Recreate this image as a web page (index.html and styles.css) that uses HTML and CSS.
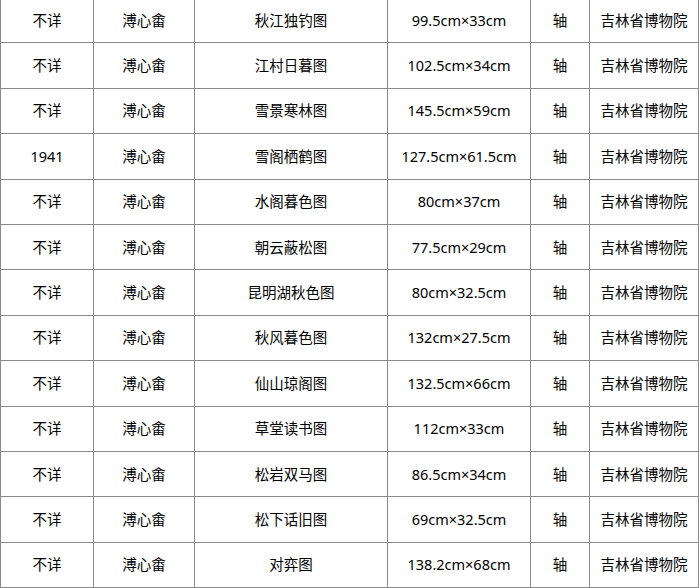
FILE: index.html
```html
<!DOCTYPE html>
<html lang="zh">
<head>
<meta charset="utf-8">
<link rel="stylesheet" href="styles.css">
</head>
<body>
<table class="works">
<colgroup>
<col class="c1"><col class="c2"><col class="c3"><col class="c4"><col class="c5"><col class="c6">
</colgroup>
<tbody>
<tr><td>不详</td><td>溥心畬</td><td>秋江独钓图</td><td>99.5cm×33cm</td><td>轴</td><td>吉林省博物院</td></tr>
<tr><td>不详</td><td>溥心畬</td><td>江村日暮图</td><td>102.5cm×34cm</td><td>轴</td><td>吉林省博物院</td></tr>
<tr><td>不详</td><td>溥心畬</td><td>雪景寒林图</td><td>145.5cm×59cm</td><td>轴</td><td>吉林省博物院</td></tr>
<tr><td>1941</td><td>溥心畬</td><td>雪阁栖鹤图</td><td>127.5cm×61.5cm</td><td>轴</td><td>吉林省博物院</td></tr>
<tr><td>不详</td><td>溥心畬</td><td>水阁暮色图</td><td>80cm×37cm</td><td>轴</td><td>吉林省博物院</td></tr>
<tr><td>不详</td><td>溥心畬</td><td>朝云蔽松图</td><td>77.5cm×29cm</td><td>轴</td><td>吉林省博物院</td></tr>
<tr><td>不详</td><td>溥心畬</td><td>昆明湖秋色图</td><td>80cm×32.5cm</td><td>轴</td><td>吉林省博物院</td></tr>
<tr><td>不详</td><td>溥心畬</td><td>秋风暮色图</td><td>132cm×27.5cm</td><td>轴</td><td>吉林省博物院</td></tr>
<tr><td>不详</td><td>溥心畬</td><td>仙山琼阁图</td><td>132.5cm×66cm</td><td>轴</td><td>吉林省博物院</td></tr>
<tr><td>不详</td><td>溥心畬</td><td>草堂读书图</td><td>112cm×33cm</td><td>轴</td><td>吉林省博物院</td></tr>
<tr><td>不详</td><td>溥心畬</td><td>松岩双马图</td><td>86.5cm×34cm</td><td>轴</td><td>吉林省博物院</td></tr>
<tr><td>不详</td><td>溥心畬</td><td>松下话旧图</td><td>69cm×32.5cm</td><td>轴</td><td>吉林省博物院</td></tr>
<tr><td>不详</td><td>溥心畬</td><td>对弈图</td><td>138.2cm×68cm</td><td>轴</td><td>吉林省博物院</td></tr>
</tbody>
</table>
</body>
</html>
```

FILE: styles.css
```css
html, body {
  margin: 0;
  padding: 0;
  background: #fff;
}
body {
  font-family: "Noto Sans", "Noto Sans CJK SC", sans-serif;
  font-size: 14.5px;
  color: #000;
}
.works {
  border-collapse: collapse;
  table-layout: fixed;
  width: 698px;
  margin-top: -3px;
}
.works td {
  border: 1.5px solid #8a8a8a;
  height: 43.4px;
  padding: 0 0 1px;
  text-align: center;
  vertical-align: middle;
  line-height: 20px;
}
.c1 { width: 93px; }
.c2 { width: 101px; }
.c3 { width: 193px; }
.c4 { width: 143px; }
.c5 { width: 59px; }
.c6 { width: 109px; }
```
